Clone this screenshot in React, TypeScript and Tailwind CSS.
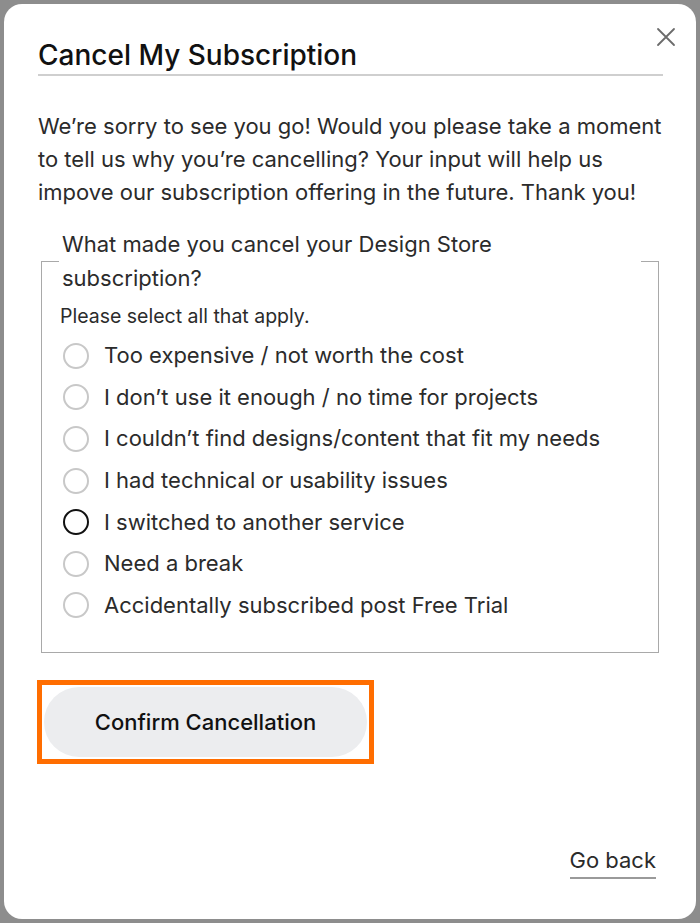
import { useState } from 'react'

const reasons = [
  'Too expensive / not worth the cost',
  'I don’t use it enough / no time for projects',
  'I couldn’t find designs/content that fit my needs',
  'I had technical or usability issues',
  'I switched to another service',
  'Need a break',
  'Accidentally subscribed post Free Trial',
]

function CloseIcon() {
  return (
    <svg width="20" height="20" viewBox="0 0 20 20" fill="none" stroke="#6b6b6b" strokeWidth="1.8" strokeLinecap="round">
      <path d="M2 2 L18 18 M18 2 L2 18" />
    </svg>
  )
}

export default function App() {
  const [focused] = useState(4)
  const [picked, setPicked] = useState<number[]>([])

  const toggle = (i: number) =>
    setPicked((p) => (p.includes(i) ? p.filter((x) => x !== i) : [...p, i]))

  return (
    <div
      className="min-h-screen w-full bg-[#8d8d8d] pt-[4px] pl-[4px] pr-[4px] pb-[4px]"
      style={{ fontFamily: 'Inter, "Noto Sans", sans-serif' }}
    >
      <div className="relative flex h-[915px] w-[692px] flex-col rounded-[18px] bg-white pl-[34px] pr-[33px] pt-[35px] pb-[40px]">
        <button className="absolute right-[20px] top-[23px]" aria-label="Close">
          <CloseIcon />
        </button>

        <h2 className="border-b-2 border-[#cfcfcf] pb-[3px] text-[28px] font-medium leading-[32px] text-[#111]">
          Cancel My Subscription
        </h2>

        <p className="mt-[34px] text-[22px] leading-[33px] text-[#2b2b2b]">
          We’re sorry to see you go! Would you please take a moment to tell us why you’re cancelling? Your input
          will help us impove our subscription offering in the future. Thank you!
        </p>

        <fieldset className="ml-[3px] mt-[18px] w-[618px] border border-[#a9a9a9] pl-[18px] pb-[26px]">
          <legend className="ml-[-1px] w-[582px] px-[3px] text-[22px] leading-[34px] text-[#2b2b2b]">
            What made you cancel your Design Store
            <br />
            subscription?
          </legend>
          <div className="mt-[9px] text-[19.5px] leading-[25px] text-[#2b2b2b]">Please select all that apply.</div>
          <div className="mt-[6px] flex flex-col">
            {reasons.map((r, i) => (
              <label key={r} className="flex h-[41.6px] cursor-pointer items-center" onClick={() => toggle(i)}>
                <span
                  className={`ml-[3px] h-[26px] w-[26px] shrink-0 rounded-full border-2 ${
                    i === focused ? 'border-[#111]' : 'border-[#c8c8c8]'
                  } ${picked.includes(i) ? 'bg-[#111]' : ''}`}
                />
                <span className="ml-[15px] text-[22px] text-[#2b2b2b]">{r}</span>
              </label>
            ))}
          </div>
        </fieldset>

        <div className="mt-[27px] ml-[-1px] flex h-[84px] w-[337px] border-[5px] border-[#ff6d00] p-[2px]">
          <button className="flex-1 rounded-full bg-[#ecedef] text-[22px] font-medium text-[#111]">
            Confirm Cancellation
          </button>
        </div>

        <div className="mt-auto flex justify-end pr-[7px]">
          <a href="#" className="border-b-2 border-[#9a9a9a] pb-[2px] text-[22px] leading-[30px] text-[#2b2b2b]">
            Go back
          </a>
        </div>
      </div>
    </div>
  )
}
